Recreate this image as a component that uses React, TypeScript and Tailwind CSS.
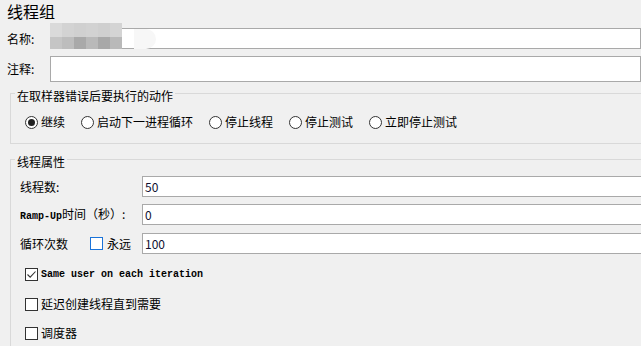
import type { ReactNode } from "react";

const cjk = "font-['Microsoft_YaHei','Noto_Sans_CJK_SC',sans-serif]";
const mono = "font-['Liberation_Mono','Noto_Sans_CJK_SC',monospace]";

function Radio({ checked, label }: { checked?: boolean; label: string }) {
  return (
    <div className="flex items-center">
      <span className="flex h-[13px] w-[13px] items-center justify-center rounded-full border border-[#333] bg-white">
        {checked && <span className="h-[7px] w-[7px] rounded-full bg-[#222]" />}
      </span>
      <span className="ml-[3px] leading-[16px]">{label}</span>
    </div>
  );
}

function Check({ checked, blue }: { checked?: boolean; blue?: boolean }) {
  return (
    <span
      className={`flex h-[13px] w-[13px] flex-none items-center justify-center border bg-white ${
        blue ? "border-[#1a73d9]" : "border-[#333]"
      }`}
    >
      {checked && (
        <svg width="11" height="11" viewBox="0 0 11 11" aria-hidden>
          <path d="M1.5 5.5 L4.2 8.2 L9.5 2.5" fill="none" stroke="#333" strokeWidth="1.1" />
        </svg>
      )}
    </span>
  );
}

function Field({ label, value }: { label: ReactNode; value: string }) {
  return (
    <div className="flex h-[21px] items-center">
      <div className="w-[131px] pl-[9px]">{label}</div>
      <div className="flex h-[21px] w-[520px] items-center border border-[#a9a9a9] bg-white pl-[2px] text-[12px] text-[#101030]">
        {value}
      </div>
    </div>
  );
}

function Blur() {
  const top = ["#dadada", "#d3d3d3", "#d0d0d0", "#d2d2d2", "#cfcfcf", "#d4d4d4"];
  const bottom = ["#c5c5c5", "#bdbdbd", "#a9a9a9", "#b9b9b9", "#a8a8a8", "#b9b9b9"];
  return (
    <div className="pointer-events-none absolute left-[-1px] top-[-6px] flex items-start">
      <div className="flex flex-col">
        <div className="flex">
          {top.map((c, i) => (
            <div key={i} className="h-[14px] w-[12px]" style={{ background: c }} />
          ))}
        </div>
        <div className="flex">
          {bottom.map((c, i) => (
            <div key={i} className="h-[12px] w-[12px]" style={{ background: c }} />
          ))}
        </div>
      </div>
      <div className="ml-[12px] mt-[6px] h-[20px] w-[22px] rounded-r-full bg-[#f7f7f7]" />
    </div>
  );
}

export default function App() {
  return (
    <div className={`h-[346px] w-[641px] overflow-hidden bg-[#f0f0f0] text-[12px] text-black ${cjk}`}>
      <div className="h-[24px] pl-[7px] text-[16px] leading-[22px]">线程组</div>

      <div className="mt-[4px] flex h-[21px] items-center">
        <div className="w-[51px] pl-[7px]">名称:</div>
        <div className="relative h-[21px] w-[600px] border border-[#a9a9a9] bg-white">
          <Blur />
        </div>
      </div>

      <div className="mt-[7px] flex h-[26px] items-center">
        <div className="w-[51px] pl-[7px]">注释:</div>
        <div className="h-[26px] w-[600px] border border-[#a9a9a9] bg-white" />
      </div>

      <fieldset className="ml-[10px] mr-[-30px] mt-[-1px] border border-[#d9d9d9] pb-[13px]">
        <legend className="ml-[4px] px-[2px] pb-[1px] pt-[7px] leading-[16px]">在取样器错误后要执行的动作</legend>
        <div className="mt-[9px] flex items-center gap-[16px] pl-[14px]">
          <Radio checked label="继续" />
          <Radio label="启动下一进程循环" />
          <Radio label="停止线程" />
          <Radio label="停止测试" />
          <Radio label="立即停止测试" />
        </div>
      </fieldset>

      <fieldset className="ml-[10px] mr-[-30px] mt-[3px] h-[240px] border border-[#d9d9d9]">
        <legend className="ml-[4px] px-[2px] pb-[1px] pt-[7px] leading-[16px]">线程属性</legend>
        <div className="mt-[5px]">
          <Field label="线程数:" value="50" />
        </div>
        <div className="mt-[7px]">
          <Field
            label={
              <span>
                <span className={`${mono} text-[10px] font-bold`}>Ramp-Up</span>时间（秒）:
              </span>
            }
            value="0"
          />
        </div>
        <div className="mt-[8px] flex h-[21px] items-center">
          <div className="flex w-[131px] items-center pl-[9px]">
            <span className="w-[70px]">循环次数</span>
            <Check blue />
            <span className="ml-[4px]">永远</span>
          </div>
          <div className="flex h-[21px] w-[520px] items-center border border-[#a9a9a9] bg-white pl-[2px] text-[#101030]">
            100
          </div>
        </div>

        <div className="mt-[12px] flex h-[16px] items-center pl-[14px]">
          <Check checked />
          <span className={`ml-[3px] ${mono} text-[10px] font-bold`}>Same user on each iteration</span>
        </div>
        <div className="mt-[14px] flex h-[16px] items-center pl-[14px]">
          <Check />
          <span className="ml-[3px]">延迟创建线程直到需要</span>
        </div>
        <div className="mt-[13px] flex h-[16px] items-center pl-[14px]">
          <Check />
          <span className="ml-[3px]">调度器</span>
        </div>
      </fieldset>
    </div>
  );
}
